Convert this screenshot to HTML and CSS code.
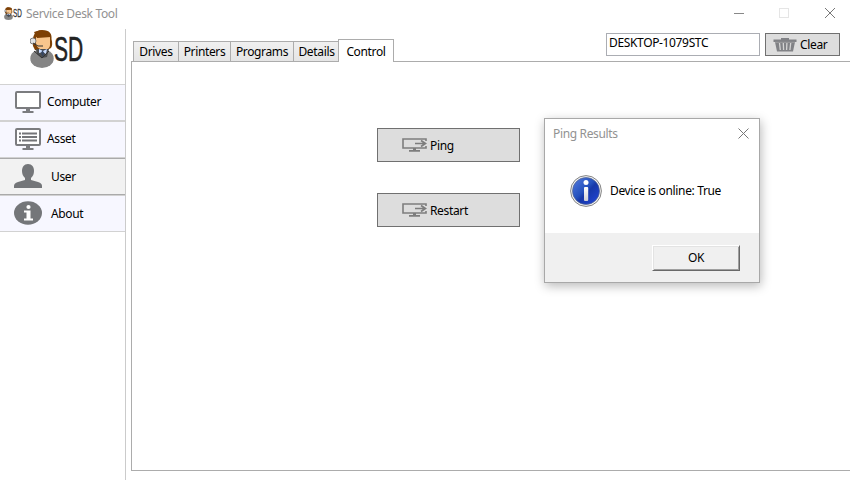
FILE: index.html
```
<!DOCTYPE html>
<html lang="en">
<head>
<meta charset="utf-8">
<title>Service Desk Tool</title>
<link rel="stylesheet" href="styles.css">
</head>
<body>
<svg width="0" height="0" class="defs">
  <defs>
    <symbol id="agent" viewBox="0 0 24 39" preserveAspectRatio="none">
      <ellipse cx="12" cy="29.500" rx="11.700" ry="9.500" fill="#858585"/>
      <path d="M3 17C2 8 4 1 12 1c8 0 10 4 9.500 9 1 4 1 7-.5 9l-4 2H5z" fill="#7d4005"/>
      <path d="M6 8l14-1v9c0 3-3 5-6 5-4 0-8-3-8-7z" fill="#f8c58c"/>
      <path d="M4 3q8-4 16 2l1 3-14 1z" fill="#7d4005"/>
      <path d="M6 20h13l-2 8-5 1-5-4z" fill="#4b4d50"/>
      <path d="M9 20l4 2 4-2-1 5-3-2-4 1z" fill="#c9dcff"/>
      <path d="M12.500 21l1.500 3-1 4-2-4z" fill="#354662"/>
      <circle cx="3" cy="12" r="3" fill="#e0e2e4" stroke="#666" stroke-width=".8"/>
      <path d="M3 14l5 3h5M4 22l8 7 7-7" fill="none" stroke="#333" stroke-width="1"/>
    </symbol>
    <symbol id="monitor" viewBox="0 0 26 23">
      <rect x="1" y="1" width="24" height="16" rx="1" fill="#fff" stroke="#7b7c7f" stroke-width="2"/>
      <path d="M11 18h4v2h3.500v2h-11v-2H11z" fill="#7b7c7f"/>
    </symbol>
    <symbol id="remote" viewBox="0 0 26 14">
      <path d="M24 3V1H1v9h23V8" fill="none" stroke="#7d7d7d" stroke-width="1.600"/>
      <path d="M11 10h3v2h4v1.800H7V12h4z" fill="#7d7d7d"/>
      <path d="M13 5.500h11M19 2.500l4.500 3-4.500 3" fill="none" stroke="#7d7d7d" stroke-width="1.600"/>
    </symbol>
  </defs>
</svg>
<header class="titlebar">
  <svg class="app-icon" width="9" height="13"><use href="#agent"/></svg>
  <span class="app-sd"><span>SD</span></span>
  <span class="app-title">Service Desk Tool</span>
  <svg class="window-controls" width="102" height="12" viewBox="0 0 102 12" fill="none">
    <path d="M0 6.500h10" stroke="#888"/>
    <rect x="45.500" y="1.500" width="9" height="9" stroke="#e5e5e5"/>
    <path d="M91 1l10 10M101 1L91 11" stroke="#777"/>
  </svg>
</header>
<div class="app">
  <nav class="sidebar">
    <div class="brand">
      <svg width="24" height="39"><use href="#agent"/></svg>
      <span class="brand-sd"><span>SD</span></span>
    </div>
    <div class="nav-item">
      <svg width="26" height="23"><use href="#monitor"/></svg><span>Computer</span>
    </div>
    <div class="nav-item">
      <svg width="26" height="23"><use href="#monitor"/><path d="M4 5.500h2M4 9h2M4 12.500h2M7 5.500h15M7 9h15M7 12.500h15" stroke="#747578" stroke-width="2.200"/></svg><span>Asset</span>
    </div>
    <div class="nav-item wide active">
      <svg width="28" height="24" viewBox="0 0 28 24" fill="#747679"><path d="M8 7c0-4 2-7 6-7s6 3 6 7c0 3-1 5-3 7v2l7 2c3 1 4 2 4 4v2H0v-2c0-2 1-3 4-4l7-2v-2c-2-2-3-4-3-7z"/></svg><span>User</span>
    </div>
    <div class="nav-item wide">
      <svg width="28" height="24" viewBox="0 0 28 24"><ellipse cx="14" cy="12" rx="14" ry="11.700" fill="#747679"/><circle cx="14.500" cy="6" r="2.100" fill="#fff"/><path d="M10 9.500h6.500v8H19v2h-9v-2h2.500v-6H10z" fill="#fff"/></svg><span>About</span>
    </div>
  </nav>
  <main class="main">
    <div class="toolbar">
      <div class="tabs">
        <div class="tab drives"><span>Drives</span></div>
        <div class="tab printers"><span>Printers</span></div>
        <div class="tab programs"><span>Programs</span></div>
        <div class="tab details"><span>Details</span></div>
        <div class="tab control"><span>Control</span></div>
      </div>
      <div class="search">
        <div class="field">DESKTOP-1079STC</div>
        <div class="clear">
          <svg width="24" height="14" viewBox="0 0 24 14"><path d="M8 1.500V0h8v1.500h7.500V4H22l-2 9.500H4L2 4H.5V1.500z" fill="#818286"/><path d="M6.500 5l.8 7M10.300 5l.3 7M13.900 5l-.3 7M17.700 5l-.8 7" stroke="#d4d4d4" stroke-width="1.300"/><path d="M2 4.300h20" stroke="#aaa" stroke-width=".7"/></svg>
          <span>Clear</span>
        </div>
      </div>
    </div>
    <section class="panel">
      <div class="action"><svg width="26" height="14"><use href="#remote"/></svg><span>Ping</span></div>
      <div class="action"><svg width="26" height="14"><use href="#remote"/></svg><span>Restart</span></div>
    </section>
  </main>
</div>
<div class="dialog">
  <div class="dialog-head">
    <span>Ping Results</span>
    <svg width="11" height="11" viewBox="0 0 11 11"><path d="M.5.5l10 10M10.500.5l-10 10" stroke="#777"/></svg>
  </div>
  <div class="dialog-body">
    <svg width="32" height="32" viewBox="0 0 32 32">
      <defs><linearGradient id="blue" x2="1" y2="1"><stop stop-color="#557ce0"/><stop offset=".45" stop-color="#2350bd"/><stop offset=".55" stop-color="#1637a8"/><stop offset="1" stop-color="#2348dc"/></linearGradient>
      <linearGradient id="silver" x2="0" y2="1"><stop stop-color="#fff"/><stop offset="1" stop-color="#cfcfd4"/></linearGradient></defs>
      <circle cx="16" cy="16" r="15.400" fill="#f2f2f2" stroke="#858585" stroke-width="1"/>
      <circle cx="16" cy="16" r="13.500" fill="url(#blue)" stroke="#53648e" stroke-width=".7"/>
      <circle cx="16" cy="7.500" r="2.500" fill="#fff"/>
      <rect x="14" y="12" width="4.200" height="14" rx="1" fill="url(#silver)"/>
    </svg>
    <span>Device is online: True</span>
  </div>
  <div class="dialog-foot"><div class="ok">OK</div></div>
</div>
</body>
</html>
```
FILE: styles.css
```
* { box-sizing: border-box; }
body {
  margin: 0;
  width: 850px;
  height: 480px;
  overflow: hidden;
  background: #fff;
  color: #000;
  font: 12px/16px "Noto Sans", "Open Sans", sans-serif;
  letter-spacing: -.35px;
  white-space: nowrap;
}
svg { display: block; flex: none; }
.defs { position: absolute; }
.titlebar { height: 29px; display: flex; align-items: flex-start; padding: 7px 14px 0 4px; color: #929292; }
.app-sd { width: 9px; margin-top: -1px; }
.app-sd span { display: block; font: 11px/14px "Liberation Sans", sans-serif; letter-spacing: 0; color: #333; -webkit-text-stroke: .3px #333; transform: scaleX(.58); transform-origin: left; }
.app-title { margin-left: 4px; margin-top: -1px; }
.window-controls { margin-left: auto; }
.app { display: flex; height: 451px; }
.sidebar { flex: none; width: 126px; border-right: 1px solid #cbcbcb; }
.brand { height: 55px; display: flex; padding-left: 30px; }
.brand-sd { width: 29px; height: 40px; }
.brand-sd span { display: block; font: 35px/40px "Liberation Sans", sans-serif; letter-spacing: 0; color: #222; -webkit-text-stroke: .6px #222; transform: scaleX(.6); transform-origin: left; }
.nav-item { height: 37px; display: flex; align-items: center; padding-left: 15px; gap: 6px; background: #f7f7ff; border: solid #d2d2d2; border-width: 1px 0; }
.nav-item > span { margin-top: -1px; }
.nav-item.wide { padding-left: 14px; gap: 9px; }
.nav-item.wide > span { margin-top: 1px; }
.nav-item.wide > svg { margin-top: -1px; }
.nav-item.active { background: #f2f2f2; border-color: #aaa; }
.main { flex: 1; min-width: 0; padding-left: 5px; }
.toolbar { height: 32px; display: flex; justify-content: space-between; padding: 0 10px 0 2px; }
.tabs { display: flex; align-items: flex-end; height: 33px; position: relative; z-index: 1; }
.tab { height: 21px; margin-right: -1px; margin-bottom: 0; border: 1px solid #acacac; background: linear-gradient(#f0f0f0, #e5e5e5); display: flex; justify-content: center; align-items: center; }
.tab span { padding-top: 1px; }
.drives { width: 46px; }
.printers { width: 53px; }
.programs { width: 64px; }
.details { width: 47px; }
.control { width: 56px; height: 23px; margin: 0 0 0 -1px; background: #fff; border-bottom: 0; position: relative; }
.search { display: flex; gap: 5px; padding-top: 4px; }
.field { width: 154px; height: 23px; border: 1px solid #abadb3; padding: 1px 2px; letter-spacing: -.35px; }
.clear { width: 75px; height: 23px; border: 1px solid #707070; background: #ddd; display: flex; align-items: center; padding-left: 7px; gap: 3px; }
.clear span { padding-top: 1px; }
.panel { width: 724px; height: 410px; border: 1px solid #acacac; border-width: 1px 0 1px 1px; padding: 66px 0 0 245px; display: flex; flex-direction: column; gap: 31px; }
.action { width: 143px; height: 34px; border: 1px solid #707070; background: #ddd; display: flex; align-items: center; padding-left: 24px; gap: 2px; }
.action span { padding-top: 2px; }
.dialog { position: absolute; left: 544px; top: 118px; width: 216px; height: 165px; border: 1px solid #a8a8a8; background: #fff; box-shadow: 1px 3px 10px rgba(0,0,0,.28); }
.dialog-head { height: 56px; padding: 7px 10px 0 8px; display: flex; justify-content: space-between; color: #929292; }
.dialog-head svg { margin-top: 2px; }
.dialog-body { height: 58px; display: flex; gap: 8px; padding-left: 25px; }
.dialog-body span { margin-top: 8px; }
.dialog-foot { height: 49px; background: #f0f0f0; padding: 12px 19px; display: flex; justify-content: flex-end; }
.ok { width: 88px; height: 26px; text-align: center; line-height: 24px; border: 1px solid; border-color: #fff #696969 #696969 #fff; box-shadow: inset 1px 1px #e3e3e3, inset -1px -1px #a0a0a0; }
```
